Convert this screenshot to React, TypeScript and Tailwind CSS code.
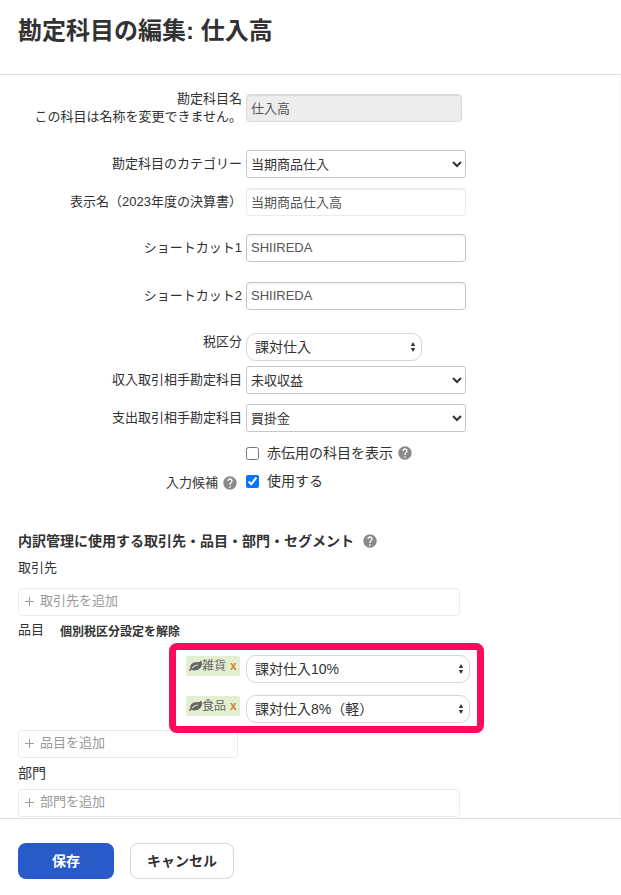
import { useId, useState, type ReactNode } from 'react'
import { MdHelp } from 'react-icons/md'

const inputBase = 'h-7 max-w-full rounded-[4px] border px-1 pb-0.5 text-[13px] text-[#555]'
const nativeSelect = 'h-7 w-[220px] max-w-full rounded-[3px] border border-[#c6c6c6] bg-white text-[13px] text-[#333]'

type RowProps = {
    label?: ReactNode;
    htmlFor?: string;
    help?: boolean;
    className?: string;
    labelClass?: string;
    children: ReactNode;
}

function Row({ label, htmlFor, help, className = 'mt-2.5', labelClass = '', children }: RowProps) {
    return (
        <div className={`flex items-center gap-1 ${className}`}>
            <div className={`flex w-56 shrink-0 items-center justify-end gap-1 text-right text-[13px] leading-[18px] ${labelClass}`}>
                {label && <label htmlFor={htmlFor}>{label}</label>}
                {help && <Help />}
            </div>
            {children}
        </div>
    )
}

function Help() {
    return (
        <button type="button" aria-label="ヘルプ" className="text-[#8c8989]">
            <MdHelp size={16} />
        </button>
    )
}

function Leaf() {
    return (
        <svg viewBox="0 0 1792 1792" className="size-[13px] shrink-0" fill="#666">
            <path d="M1280 704q0-26-19-45t-45-19q-172 0-318 49.5t-259.5 134-235.5 219.5q-19 21-19 45 0 26 19 45t45 19q24 0 45-19 27-24 74-71t67-66q137-124 268.5-176t313.5-52q26 0 45-19t19-45zm512-198q0 95-20 193-46 224-184.5 383t-357.5 268q-214 108-438 108-148 0-286-47-15-5-88-42t-96-37q-16 0-39.5 32t-45 70-52.5 70-60 32q-43 0-63.5-17.5t-45.5-59.5q-2-4-6-11t-5.5-10-3-9.5-1.5-13.5q0-35 31-73.5t68-65.5 68-56 31-48q0-4-14-38t-16-44q-9-51-9-104 0-115 43.5-220t119-184.5 170.5-139 204-95.5q55-18 145-25.5t179.5-9 178.5-6 163.5-24 113.5-56.5l29.5-29.5 29.5-28 27-20 36.5-16 43.5-4.5q39 0 70.5 46t47.5 112 24 124 8 96z" />
        </svg>
    )
}

function RoundSelect({ id, label, value, className }: { id?: string; label?: string; value: string; className: string }) {
    return (
        <div className={`relative ${className}`}>
            <select
                id={id}
                aria-label={label}
                className="h-7 w-full appearance-none rounded-[10px] border border-[#d7d5d5] bg-white pl-2 pr-6 text-sm text-[#323232]"
            >
                <option>{value}</option>
            </select>
            <svg viewBox="0 0 6 10" className="pointer-events-none absolute right-1.5 top-[9px] h-2.5 w-1.5" fill="#323232">
                <path d="M3 0 5.2 4H.8zM3 10 .8 6h4.4z" />
            </svg>
        </div>
    )
}

function TagInput({ placeholder, className }: { placeholder: string; className: string }) {
    const id = useId()

    return (
        <div className={`flex h-7 max-w-full items-center gap-1.5 rounded-[4px] border border-[#ebebeb] px-1.5 pb-0.5 ${className}`}>
            <label htmlFor={id} aria-label={placeholder}>
                <svg viewBox="0 0 9 9" className="size-[9px]" stroke="#95a395" strokeWidth="1">
                    <path d="M4.5 0v9M0 4.5h9" />
                </svg>
            </label>
            <input
                id={id}
                type="text"
                placeholder={placeholder}
                className="min-w-0 flex-1 text-[13px] outline-none placeholder:text-[#999]"
            />
        </div>
    )
}

function ItemRow({ name, tax }: { name: string; tax: string }) {
    return (
        <div className="flex items-start gap-1.5">
            <span className="mt-px flex h-5 w-[54px] items-center rounded-[2px] bg-[#e4efd2] pl-[3px] text-xs text-[#666]">
                <Leaf />
                {name}
                <button type="button" aria-label={`${name}を削除`} className="ml-1 font-bold text-[#d9822f]">x</button>
            </span>
            <RoundSelect label={`${name}の税区分`} value={tax} className="w-56" />
        </div>
    )
}

export default function App() {
    const [redSlip, setRedSlip] = useState(false);
    const [suggest, setSuggest] = useState(true);

    return (
        <form
            className="bg-white font-['Liberation_Sans','Noto_Sans_CJK_JP',sans-serif] text-[#323232]"
            onSubmit={(e) => e.preventDefault()}
        >
            <header className="border-b border-[#e1e1e1] px-[18px] pb-[27px] pt-[15px]">
                <h1 className="text-2xl font-bold">勘定科目の編集: 仕入高</h1>
            </header>

            <main className="border-r-2 border-[#fafafa] pl-[18px] pt-[15px]">
                <Row htmlFor="name" className="" label={<>勘定科目名<br />この科目は名称を変更できません。</>}>
                    <input
                        id="name"
                        disabled
                        defaultValue="仕入高"
                        className={`${inputBase} w-[216px] border-[#dadada] bg-[#ededed] shadow-[inset_0_1px_1px_#dadada]`}
                    />
                </Row>
                <Row htmlFor="category" label="勘定科目のカテゴリー" className="mt-6">
                    <select id="category" className={nativeSelect}>
                        <option>当期商品仕入</option>
                    </select>
                </Row>
                <Row htmlFor="display" label="表示名（2023年度の決算書）">
                    <input
                        id="display"
                        readOnly
                        defaultValue="当期商品仕入高"
                        className={`${inputBase} w-[220px] border-[#ebebeb] shadow-[inset_0_1px_1px_#ebebeb]`}
                    />
                </Row>
                <Row htmlFor="shortcut1" label="ショートカット1" className="mt-[18px]">
                    <input id="shortcut1" defaultValue="SHIIREDA" className={`${inputBase} w-[220px] border-[#c6c6c6] shadow-[inset_0_1px_1px_#eee]`} />
                </Row>
                <Row htmlFor="shortcut2" label="ショートカット2" className="mt-5">
                    <input id="shortcut2" defaultValue="SHIIREDA" className={`${inputBase} w-[220px] border-[#c6c6c6] shadow-[inset_0_1px_1px_#eee]`} />
                </Row>
                <Row htmlFor="tax" label="税区分" className="mt-[23px]" labelClass="self-start">
                    <RoundSelect id="tax" value="課対仕入" className="w-44" />
                </Row>
                <Row htmlFor="income" label="収入取引相手勘定科目" className="mt-[5px]">
                    <select id="income" className={nativeSelect}>
                        <option>未収収益</option>
                    </select>
                </Row>
                <Row htmlFor="expense" label="支出取引相手勘定科目">
                    <select id="expense" className={nativeSelect}>
                        <option>買掛金</option>
                    </select>
                </Row>
                <Row className="mt-[7px] h-7">
                    <input id="redSlip" type="checkbox" className="size-[13px]" checked={redSlip} onChange={(e) => setRedSlip(e.target.checked)} />
                    <label htmlFor="redSlip" className="pl-1 text-sm">赤伝用の科目を表示</label>
                    <Help />
                </Row>
                <Row htmlFor="suggest" label="入力候補" help className="h-7" labelClass="pr-1 pt-1">
                    <input id="suggest" type="checkbox" className="size-[13px]" checked={suggest} onChange={(e) => setSuggest(e.target.checked)} />
                    <label htmlFor="suggest" className="pl-1 text-sm">使用する</label>
                </Row>

                <div className="mt-9 flex items-center gap-2">
                    <h2 className="text-sm font-bold">内訳管理に使用する取引先・品目・部門・セグメント</h2>
                    <Help />
                </div>

                <h3 className="mt-2 text-[13px] leading-[18px]">取引先</h3>
                <TagInput placeholder="取引先を追加" className="mt-[11px] w-[442px]" />

                <div className="mt-1 flex items-center gap-4">
                    <h3 className="text-[13px] leading-[18px]">品目</h3>
                    <button type="button" className="pt-1 text-xs font-bold">個別税区分設定を解除</button>
                </div>
                <div className="relative ml-[168px] mt-[15px] flex w-fit flex-col gap-3">
                    <ItemRow name="雑貨" tax="課対仕入10%" />
                    <ItemRow name="食品" tax="課対仕入8%（軽）" />
                    <div className="pointer-events-none absolute -bottom-2.5 -left-[17px] -right-[14px] -top-3 z-10 rounded-lg border-[7px] border-[#ff0a5a]" />
                </div>
                <TagInput placeholder="品目を追加" className="mt-[7px] w-[220px]" />

                <h3 className="mt-[5px] text-sm">部門</h3>
                <TagInput placeholder="部門を追加" className="mb-px mt-1.5 w-[442px]" />
            </main>

            <footer className="flex gap-4 border-t border-[#e1e1e1] px-[18px] pb-4 pt-6 text-sm font-bold">
                <button type="submit" className="h-9 w-24 rounded-lg bg-[#285ac8] text-white">保存</button>
                <button type="button" className="h-9 rounded-lg border border-[#d7d5d5] bg-white px-4">キャンセル</button>
            </footer>
        </form>
    )
}
